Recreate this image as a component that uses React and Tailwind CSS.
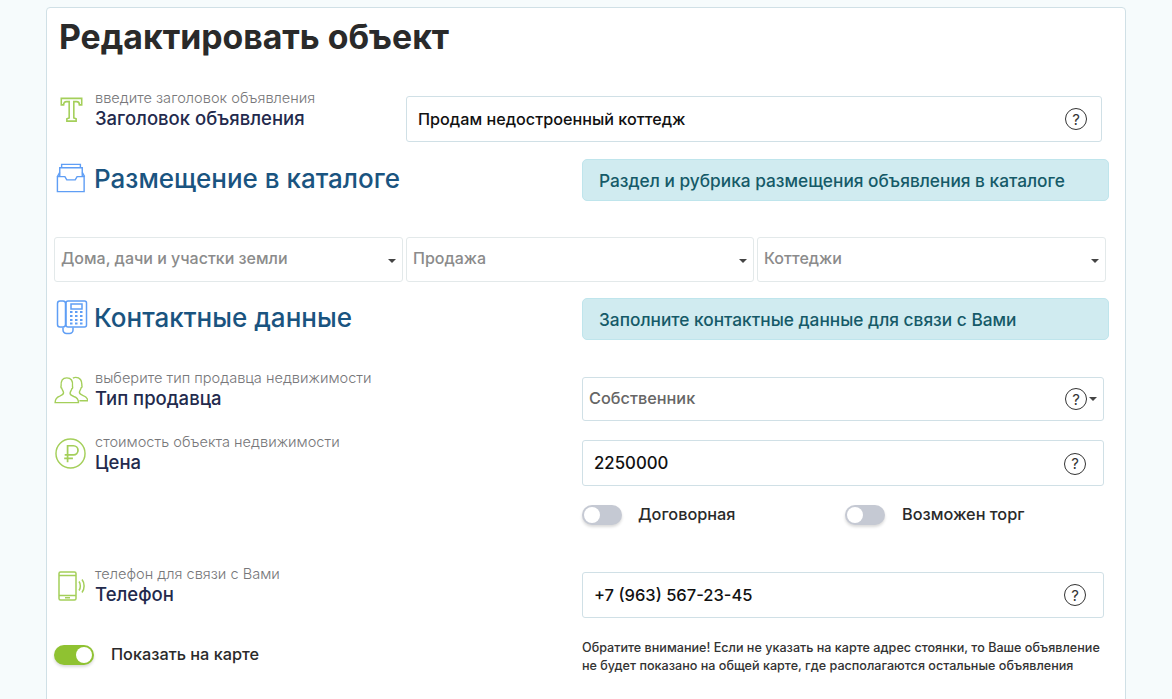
import React from 'react';

const FONT = "font-['Inter','Noto_Sans',sans-serif]";

const Help = () => (
  <span className="flex items-center justify-center w-[22px] h-[22px] rounded-full border border-[#333] text-[15px] leading-none text-[#333] font-normal shrink-0">
    ?
  </span>
);

const Caret = ({ className = '' }) => (
  <span className={`w-0 h-0 border-x-[4.5px] border-x-transparent border-t-[4.5px] border-t-[#444] ${className}`} />
);

const Toggle = ({ on = false }) => (
  <span
    className={`relative flex items-center w-[40px] h-[20px] rounded-full shrink-0 shadow-[0_2px_3px_rgba(0,0,0,0.15)] ${
      on ? 'bg-[#8fc231] justify-end' : 'bg-[#c5c9d3] justify-start'
    }`}
  >
    <span className="w-[16px] h-[16px] rounded-full bg-white mx-[2px]" />
  </span>
);

const TitleIcon = () => (
  <svg width="23" height="26" viewBox="0 0 24 28" fill="none" stroke="#a4cf5a" strokeWidth="1.7">
    <path d="M1 1.5h22v7h-2.500c0-2-1-3.500-3-3.500h-3v17.500l2.500 1v2.500H7v-2.500l2.500-1V5h-3c-2 0-3 1.500-3 3.500H1z" />
  </svg>
);

const TrayIcon = () => (
  <svg width="30" height="30" viewBox="0 0 32 32" fill="none" stroke="#5f9ef5" strokeWidth="1.5">
    <path d="M6 5V1.500h20V5" />
    <path d="M4 14V5h24v9" />
    <path d="M1.500 14.500h8l2 3.500h9l2-3.500h7.500V30.500H1.500z" />
    <path d="M1.500 14.500L4 10M30.500 14.500L28 10" />
  </svg>
);

const PhoneDeskIcon = () => (
  <svg width="32" height="36" viewBox="0 0 32 36" fill="none" stroke="#5f9ef5" strokeWidth="1.5">
    <rect x="1.500" y="2" width="8" height="26" rx="2.500" />
    <rect x="10" y="2" width="20.500" height="26" rx="2" />
    <rect x="15" y="5" width="11" height="5" />
    <path d="M14 13h2.500M19 13h2.500M24 13h2.500M14 17h2.500M19 17h2.500M24 17h2.500M14 21h2.500M19 21h2.500M24 21h2.500M14 24.500h2.500M19 24.500h2.500M24 24.500h2.500" strokeWidth="1.800" />
    <path d="M7 28.500v2.500a3.500 3.500 0 0 0 3.500 3.500h3a3.500 3.500 0 0 0 3.500-3.500v-2.500" />
  </svg>
);

const PeopleIcon = () => (
  <svg width="34" height="28" viewBox="0 0 36 30" fill="none" stroke="#a4cf5a" strokeWidth="1.5">
    <path d="M1 28.500h25c0-4-2-5.500-5-6.500-2.500-.9-4-1.500-4-3.500 0-1.500 1.500-3 2-5 .8-.2 1-1.500.6-2.300C20.500 5 18 2 13.500 2S7 5 7.400 10.700C7 11.500 7.200 12.800 8 13c.5 2 2 3.500 2 5 0 2-1.500 2.600-4 3.500-3 1-5 2.500-5 7z" />
    <path d="M20 2.300c1-.5 2-.8 3-.8 4.500 0 7 3 6.600 8.700.4.800.2 2.100-.6 2.300-.5 2-2 3.500-2 5 0 2 1.500 2.600 4 3.500 2.500.9 4.500 2 5 5.500h-9" />
  </svg>
);

const RubleIcon = () => (
  <svg width="31" height="31" viewBox="0 0 32 32" fill="none" stroke="#a4cf5a" strokeWidth="1.500">
    <circle cx="16" cy="16" r="15" />
    <path d="M13 25V8h6a4.500 4.500 0 0 1 0 9.500h-9M9.500 21h9" strokeWidth="1.800" />
  </svg>
);

const MobileIcon = () => (
  <svg width="28" height="30" viewBox="0 0 28 30" fill="none" stroke="#a4cf5a" strokeWidth="1.500">
    <rect x="1" y="1" width="17" height="28" rx="1.500" />
    <path d="M1 4.500h17M1 24.500h17M7 26.800h5" />
    <path d="M21 10.500c1.800 2.500 1.800 6.500 0 9M24 8.500c2.800 3.500 2.800 9.500 0 13" />
  </svg>
);

const LabelRow = ({ icon, hint, label, iconClass = '', textClass = '-mt-[6px]' }) => (
  <div className="flex items-start">
    <div className={`w-[41px] shrink-0 ${iconClass}`}>{icon}</div>
    <div className={textClass}>
      <div className="text-[14.6px] leading-[15px] font-light text-[#77777a] whitespace-nowrap">{hint}</div>
      <div className="text-[18.5px] leading-[24px] font-medium text-[#232a4d] whitespace-nowrap">{label}</div>
    </div>
  </div>
);

const Section = ({ icon, title, note, mt }) => (
  <div className={`flex items-start ${mt}`}>
    <div className="w-[528px] shrink-0 flex items-start">
      <div className="w-[40px] shrink-0">{icon}</div>
      <h2 className="text-[26px] leading-[39px] font-medium text-[#1a5480] whitespace-nowrap">{title}</h2>
    </div>
    <div className="w-[527px] h-[42px] flex items-center px-[16px] pt-[1px] bg-[#d0ebf0] border border-[#bfe5ec] rounded-[5px] text-[17.3px] font-medium text-[#155a68] whitespace-nowrap">
      {note}
    </div>
  </div>
);

const SelectBox = ({ text, className = 'w-[349px]' }) => (
  <div className={`h-[45px] flex items-center justify-between pl-[6px] pr-[6px] bg-white border border-[#e3e9ea] rounded-[3px] text-[16px] font-medium text-[#8b8b8b] ${className}`}>
    <span className="whitespace-nowrap pb-[3px]">{text}</span>
    <Caret className="mt-[3px]" />
  </div>
);

const TextInput = ({ value, className = '' }) => (
  <div className={`h-[46px] flex items-center justify-between pl-[11px] bg-white border border-[#d0e0e6] rounded-[3px] font-medium text-[#111] ${className}`}>
    <span className="whitespace-nowrap">{value}</span>
    <Help />
  </div>
);

export default function App() {
  return (
    <div className={`h-[699px] overflow-hidden bg-[#f6fbfc] pt-[7px] pl-[46px] ${FONT}`}>
      <div className="w-[1080px] h-[720px] bg-white border border-[#d0e0e6] rounded-[4px] pl-[7px]">
        <h1 className="ml-[5px] mt-[8px] text-[33.8px] leading-[42px] font-bold text-[#2a2a2a] whitespace-nowrap">
          Редактировать объект
        </h1>

        <div className="flex items-start mt-[38px]">
          <div className="w-[352px] shrink-0">
            <LabelRow icon={<TitleIcon />} iconClass="pl-[6px] pt-[1px]" textClass="-mt-[5px]" hint="введите заголовок объявления" label="Заголовок объявления" />
          </div>
          <TextInput value="Продам недостроенный коттедж" className="w-[696px] pr-[14px] text-[16.2px]" />
        </div>

        <Section icon={<div className="ml-[2px] mt-[4px]"><TrayIcon /></div>} title="Размещение в каталоге" note="Раздел и рубрика размещения объявления в каталоге" mt="mt-[17px]" />

        <div className="flex gap-[3px] mt-[36px]">
          <SelectBox text="Дома, дачи и участки земли" />
          <SelectBox text="Продажа" className="w-[348px]" />
          <SelectBox text="Коттеджи" />
        </div>

        <Section icon={<div className="ml-[2px] mt-[1px]"><PhoneDeskIcon /></div>} title="Контактные данные" note="Заполните контактные данные для связи с Вами" mt="mt-[16px]" />

        <div className="flex items-start mt-[37px]">
          <div className="w-[528px] shrink-0">
            <LabelRow icon={<PeopleIcon />} iconClass="-mt-[1px]" hint="выберите тип продавца недвижимости" label="Тип продавца" />
          </div>
          <div className="w-[522px] h-[44px] flex items-center justify-between pl-[6px] pr-[6px] bg-white border border-[#d0e0e6] rounded-[3px] text-[16.3px] font-medium text-[#666]">
            <span className="pb-[1px]">Собственник</span>
            <span className="flex items-center gap-[2px]">
              <Help />
              <Caret />
            </span>
          </div>
        </div>

        <div className="flex items-start mt-[19px]">
          <div className="w-[528px] shrink-0">
            <LabelRow icon={<RubleIcon />} iconClass="pl-[1px] -mt-[2px]" textClass="-mt-[5px]" hint="стоимость объекта недвижимости" label="Цена" />
          </div>
          <TextInput value="2250000" className="w-[522px] pr-[17px] pt-[1px] text-[16.8px]" />
        </div>

        <div className="flex items-center mt-[18px] ml-[528px] text-[16.3px] leading-[20px] font-medium text-[#2a2a2a]">
          <div className="w-[263px] flex items-center gap-[16px]">
            <Toggle />
            <span className="pb-[1px]">Договорная</span>
          </div>
          <div className="flex items-center gap-[17px]">
            <Toggle />
            <span className="pb-[1px]">Возможен торг</span>
          </div>
        </div>

        <div className="flex items-start mt-[47px]">
          <div className="w-[528px] shrink-0">
            <LabelRow icon={<MobileIcon />} iconClass="pl-[4px] -mt-[1px]" textClass="-mt-[5px]" hint="телефон для связи с Вами" label="Телефон" />
          </div>
          <TextInput value="+7 (963) 567-23-45" className="w-[522px] pr-[17px] text-[16.5px]" />
        </div>

        <div className="flex items-start mt-[16px]">
          <div className="w-[528px] shrink-0 flex items-center gap-[17px] mt-[10px] text-[16.3px] leading-[20px] font-medium text-[#2a2a2a]">
            <Toggle on />
            <span className="pb-[1px]">Показать на карте</span>
          </div>
          <p className="w-[522px] mt-[5px] text-[12.6px] leading-[18px] font-medium text-[#333]">
            Обратите внимание! Если не указать на карте адрес стоянки, то Ваше объявление не будет показано на общей карте, где располагаются остальные объявления
          </p>
        </div>
      </div>
    </div>
  );
}
